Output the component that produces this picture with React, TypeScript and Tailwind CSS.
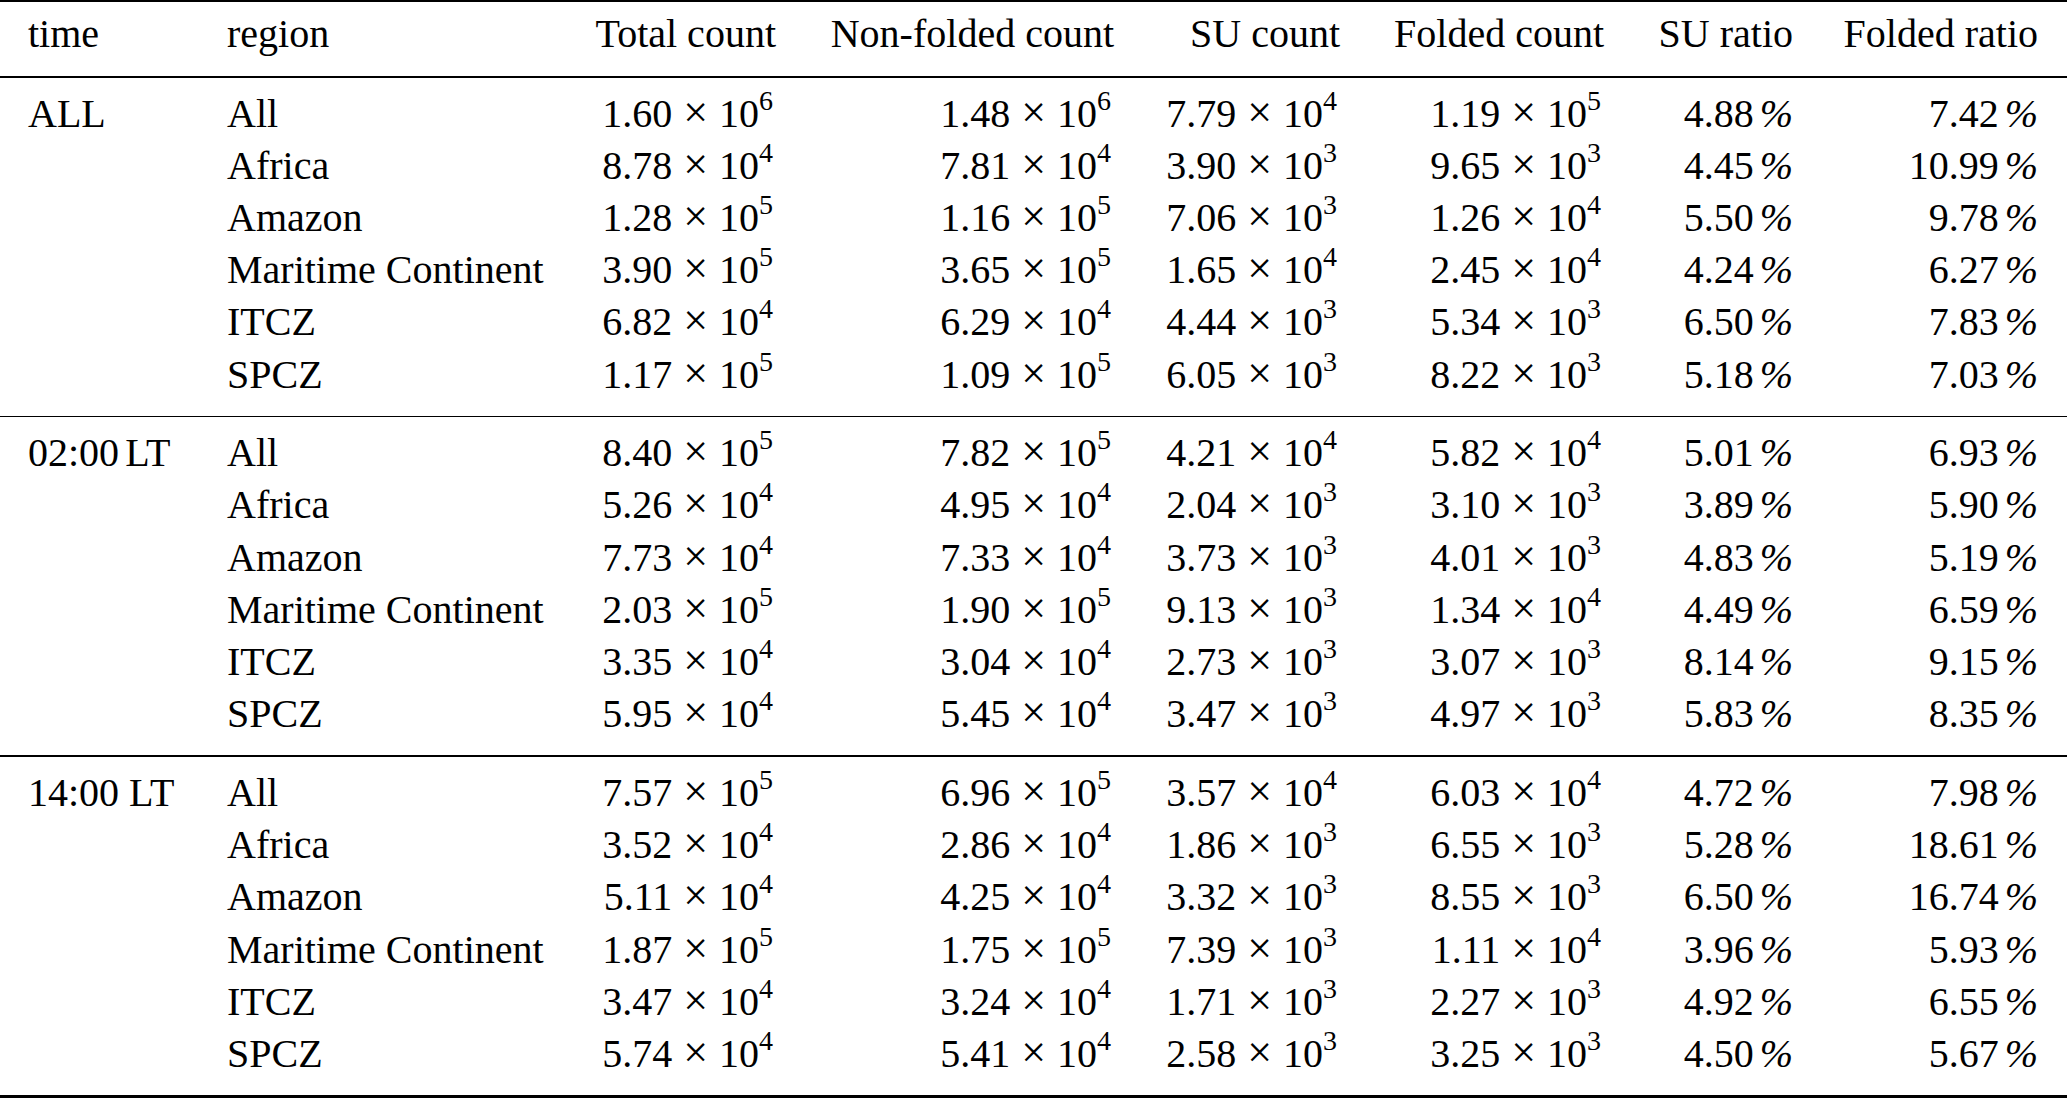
import React from "react";

type Row = [string, string, string, string, string, string, string];

const groups: { time: React.ReactNode; rows: Row[] }[] = [
  {
    time: "ALL",
    rows: [
      ["All", "1.60|6", "1.48|6", "7.79|4", "1.19|5", "4.88", "7.42"],
      ["Africa", "8.78|4", "7.81|4", "3.90|3", "9.65|3", "4.45", "10.99"],
      ["Amazon", "1.28|5", "1.16|5", "7.06|3", "1.26|4", "5.50", "9.78"],
      ["Maritime Continent", "3.90|5", "3.65|5", "1.65|4", "2.45|4", "4.24", "6.27"],
      ["ITCZ", "6.82|4", "6.29|4", "4.44|3", "5.34|3", "6.50", "7.83"],
      ["SPCZ", "1.17|5", "1.09|5", "6.05|3", "8.22|3", "5.18", "7.03"],
    ],
  },
  {
    time: (
      <>
        02:00<span className="ml-[6px]">LT</span>
      </>
    ),
    rows: [
      ["All", "8.40|5", "7.82|5", "4.21|4", "5.82|4", "5.01", "6.93"],
      ["Africa", "5.26|4", "4.95|4", "2.04|3", "3.10|3", "3.89", "5.90"],
      ["Amazon", "7.73|4", "7.33|4", "3.73|3", "4.01|3", "4.83", "5.19"],
      ["Maritime Continent", "2.03|5", "1.90|5", "9.13|3", "1.34|4", "4.49", "6.59"],
      ["ITCZ", "3.35|4", "3.04|4", "2.73|3", "3.07|3", "8.14", "9.15"],
      ["SPCZ", "5.95|4", "5.45|4", "3.47|3", "4.97|3", "5.83", "8.35"],
    ],
  },
  {
    time: "14:00 LT",
    rows: [
      ["All", "7.57|5", "6.96|5", "3.57|4", "6.03|4", "4.72", "7.98"],
      ["Africa", "3.52|4", "2.86|4", "1.86|3", "6.55|3", "5.28", "18.61"],
      ["Amazon", "5.11|4", "4.25|4", "3.32|3", "8.55|3", "6.50", "16.74"],
      ["Maritime Continent", "1.87|5", "1.75|5", "7.39|3", "1.11|4", "3.96", "5.93"],
      ["ITCZ", "3.47|4", "3.24|4", "1.71|3", "2.27|3", "4.92", "6.55"],
      ["SPCZ", "5.74|4", "5.41|4", "2.58|3", "3.25|3", "4.50", "5.67"],
    ],
  },
];

function Sci({ v }: { v: string }) {
  const [m, e] = v.split("|");
  return (
    <span className="whitespace-nowrap pr-[3px]">
      {m}
      <span className="mx-[11px] text-[44px] leading-none">×</span>
      10
      <span className="relative -top-[17px] text-[28px] leading-none">{e}</span>
    </span>
  );
}

function Pct({ v }: { v: string }) {
  return (
    <span className="whitespace-nowrap">
      {v}
      <span className="ml-[6px] italic">%</span>
    </span>
  );
}

function Cells({
  a,
  b,
  c,
  d,
  e,
  f,
  g,
  h,
}: {
  a: React.ReactNode;
  b: React.ReactNode;
  c: React.ReactNode;
  d: React.ReactNode;
  e: React.ReactNode;
  f: React.ReactNode;
  g: React.ReactNode;
  h: React.ReactNode;
}) {
  return (
    <>
      <div className="w-[199px] shrink-0 whitespace-nowrap">{a}</div>
      <div className="w-[300px] shrink-0 whitespace-nowrap">{b}</div>
      <div className="w-[249px] shrink-0 text-right whitespace-nowrap">{c}</div>
      <div className="w-[338px] shrink-0 text-right whitespace-nowrap">{d}</div>
      <div className="w-[226px] shrink-0 text-right whitespace-nowrap">{e}</div>
      <div className="w-[264px] shrink-0 text-right whitespace-nowrap">{f}</div>
      <div className="w-[189px] shrink-0 text-right whitespace-nowrap">{g}</div>
      <div className="w-[245px] shrink-0 text-right whitespace-nowrap">{h}</div>
    </>
  );
}

export default function App() {
  return (
    <div className="w-[2067px] h-[1098px] overflow-hidden bg-white text-black [font-family:'Liberation_Serif','Times_New_Roman',serif] text-[40px]">
      <div className="h-[2px] bg-black" />
      <div className="flex pl-[28px] pr-[29px] pt-[5.5px] pb-[16.5px] leading-[52px]">
        <Cells
          a="time"
          b="region"
          c="Total count"
          d="Non-folded count"
          e="SU count"
          f="Folded count"
          g="SU ratio"
          h="Folded ratio"
        />
      </div>
      {groups.map((g, gi) => (
        <div key={gi}>
          <div className="h-[1.5px] bg-black" />
          <div className="pt-[10px] pb-[15px] pl-[28px] pr-[29px] leading-[52.2px]">
            {g.rows.map((r, ri) => (
              <div key={ri} className="flex">
                <Cells
                  a={ri === 0 ? g.time : ""}
                  b={r[0]}
                  c={<Sci v={r[1]} />}
                  d={<Sci v={r[2]} />}
                  e={<Sci v={r[3]} />}
                  f={<Sci v={r[4]} />}
                  g={<Pct v={r[5]} />}
                  h={<Pct v={r[6]} />}
                />
              </div>
            ))}
          </div>
        </div>
      ))}
      <div className="h-[3px] bg-black" />
    </div>
  );
}
